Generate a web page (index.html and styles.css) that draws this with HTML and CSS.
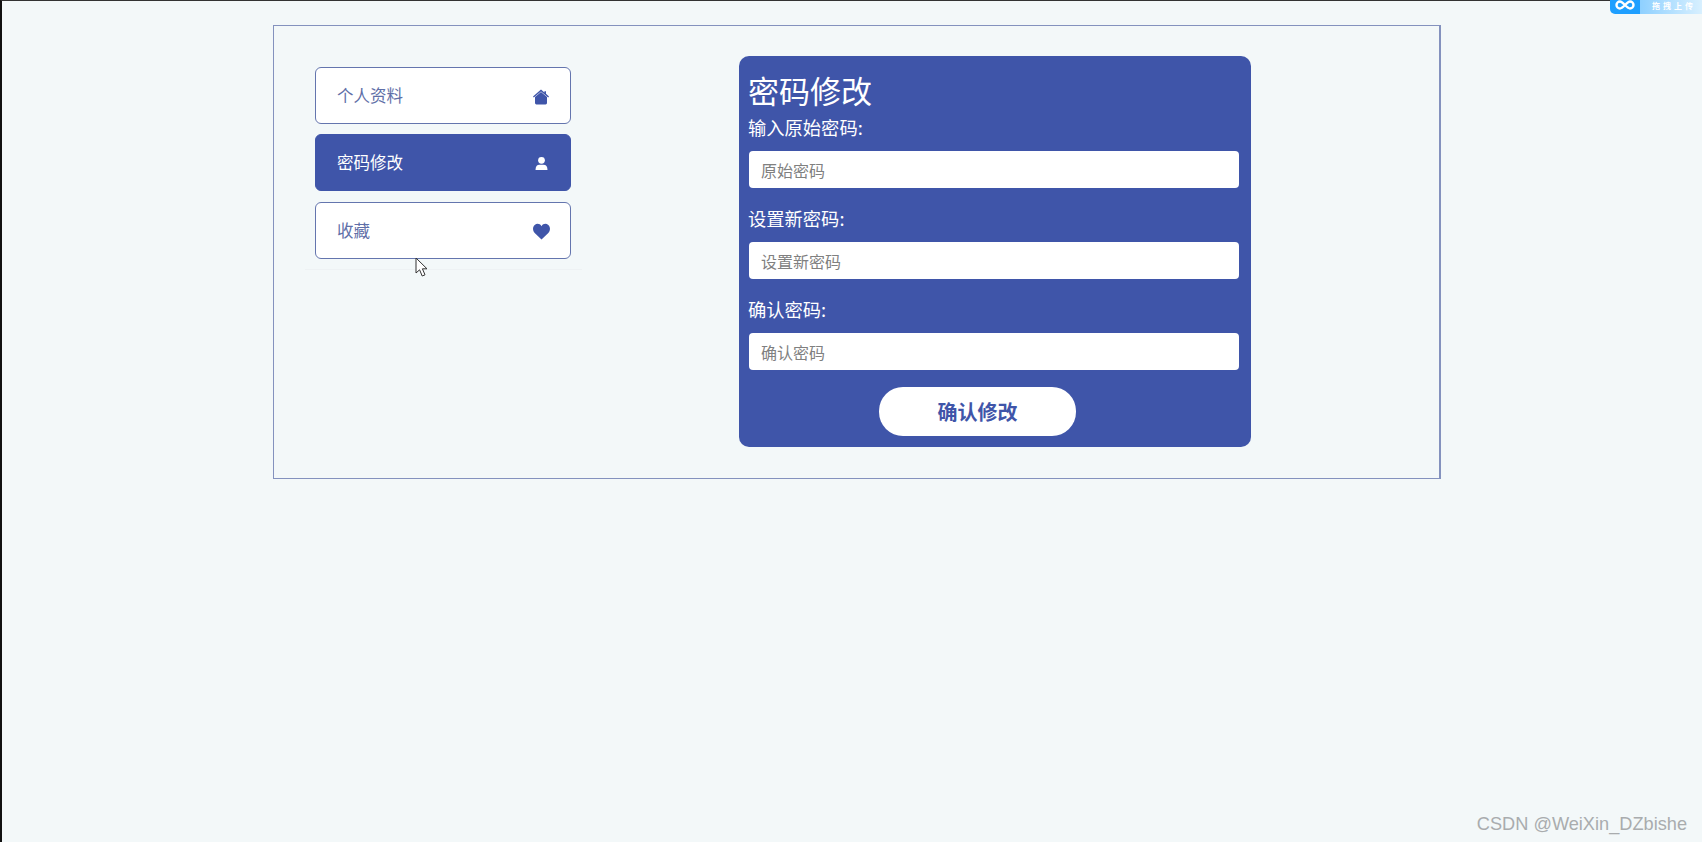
FILE: index.html
```html
<!DOCTYPE html>
<html lang="zh-CN">
<head>
  <meta charset="UTF-8" />
  <title>密码修改</title>
  <link rel="stylesheet" href="styles.css">
</head>
<body>
  <div class="frame">
    <!-- Side menu -->
    <nav class="menu">
      <a class="menu-item">
        <span>个人资料</span>
        <svg class="menu-icon" viewBox="0 0 16 16"><path d="M8 .6 L11.4 3.4 V2.2 H13 V4.8 L16 7.6 L15.2 8.5 L8 2.6 L.8 8.5 L0 7.6 Z"/><path d="M8 2.9 L14 7.9 V14 Q14 15.4 12.6 15.4 H3.4 Q2 15.4 2 14 V7.9 Z"/></svg>
      </a>
      <a class="menu-item active">
        <span>密码修改</span>
        <svg class="menu-icon" viewBox="0 0 16 16"><circle cx="8" cy="4.6" r="3.6"/><path d="M1.6 15 Q1.6 9.4 6 9.4 H10 Q14.4 9.4 14.4 15 Z"/></svg>
      </a>
      <a class="menu-item last">
        <span>收藏</span>
        <svg class="menu-icon heart" viewBox="0 0 16 16"><path d="M8 15.6 L1.6 9.4 C-.6 7.2 -.4 3.4 1.6 1.8 C3.8 0 6.6 .6 8 3 C9.4 .6 12.2 0 14.4 1.8 C16.4 3.4 16.6 7.2 14.4 9.4 Z"/></svg>
      </a>
    </nav>

    <!-- Password form -->
    <form class="panel">
      <h2>密码修改</h2>
      <div class="field">
        <label for="oldPwd">输入原始密码:</label>
        <input id="oldPwd" type="text" placeholder="原始密码" />
      </div>
      <div class="field">
        <label for="newPwd">设置新密码:</label>
        <input id="newPwd" type="text" placeholder="设置新密码" />
      </div>
      <div class="field">
        <label for="rePwd">确认密码:</label>
        <input id="rePwd" type="text" placeholder="确认密码" />
      </div>
      <button class="submit" type="button">确认修改</button>
    </form>
  </div>

  <!-- Mouse pointer -->
  <svg class="cursor" viewBox="0 0 14 21"><path d="M1 1 V16 L4.6 12.8 L7.2 19 L10 17.8 L7.4 11.8 H12 Z"/></svg>

  <!-- Top right widget -->
  <div class="widget">
    <span class="widget-logo">
      <svg viewBox="0 0 20 10"><path d="M5 1.5 C8 1.5 12 8.5 15 8.5 A3.5 3.5 0 0 0 15 1.5 C12 1.5 8 8.5 5 8.5 A3.5 3.5 0 0 1 5 1.5 Z"/></svg>
    </span>
    <span class="widget-text">拖拽上传</span>
  </div>

  <div class="watermark">CSDN @WeiXin_DZbishe</div>
</body>
</html>
```

FILE: styles.css
```css
* {
  box-sizing: border-box;
}

html, body {
  height: 100%;
}

body {
  margin: 0;
  overflow: hidden;
  background: #f3f8f9;
  border-left: 2px solid #111;
  border-top: 1px solid #333;
  font-family: "Noto Sans CJK SC", sans-serif;
}

.frame {
  display: flex;
  align-items: flex-start;
  width: 1168px;
  margin: 24px 0 0 271px;
  padding: 30px 0 31px 31px;
  border: 1px solid #8492be;
  border-right-width: 2px;
}

.menu {
  display: flex;
  flex-direction: column;
  gap: 10px;
  width: 277px;
  margin-top: 11px;
  padding: 0 11px 10px 10px;
  border-bottom: 1px solid #eef2f4;
}

.menu-item {
  display: flex;
  align-items: center;
  justify-content: space-between;
  height: 57px;
  padding: 0 21px;
  background: #fff;
  border: 1px solid #6475ae;
  border-radius: 6px;
  color: #5f6fa8;
  font-size: 16.5px;
}

.menu-item span {
  margin-bottom: 1px;
}

.menu-item.last {
  margin-top: 1px;
}

.menu-item.active {
  background: #3f55a9;
  border-color: #3f55a9;
  color: #fff;
}

.menu-icon {
  width: 16px;
  height: 16px;
  margin-top: 2px;
  fill: #3f55a9;
}

.menu-item.active .menu-icon {
  fill: #fff;
  width: 15px;
  height: 15px;
}

.heart {
  width: 17px;
  height: 17px;
  margin-right: -1px;
}

.panel {
  width: 512px;
  margin-left: 157px;
  padding: 14px 11px 11px 9px;
  background: #3f55a9;
  border-radius: 10px;
  color: #fff;
}

.panel h2 {
  margin: 0 0 6px;
  font-size: 31px;
  font-weight: 400;
  line-height: 40px;
}

.field {
  margin-bottom: 19px;
}

.field:last-of-type {
  margin-bottom: 17px;
}

.field label {
  display: block;
  height: 24px;
  margin-bottom: 11px;
  font-size: 18.3px;
  line-height: 22px;
}

.field input {
  display: block;
  width: 490px;
  height: 37px;
  margin-left: 1px;
  padding: 0 12px;
  background: #fff;
  border: none;
  border-radius: 4px;
  font-family: inherit;
  font-size: 16px;
}

.field input::placeholder {
  color: #808080;
  opacity: 1;
}

.submit {
  display: block;
  width: 197px;
  height: 49px;
  margin-left: 131px;
  background: #fff;
  border: none;
  border-radius: 24px;
  color: #3f55a9;
  font-family: inherit;
  font-size: 20px;
  font-weight: 700;
}

.cursor {
  position: absolute;
  left: 415px;
  top: 257px;
  width: 14px;
  height: 21px;
  fill: #fff;
  stroke: #333;
  stroke-width: 1;
}

.widget {
  position: absolute;
  top: 0;
  right: 0;
  display: flex;
  width: 92px;
  height: 14px;
  overflow: hidden;
  border-bottom-left-radius: 5px;
}

.widget-logo {
  display: flex;
  align-items: center;
  justify-content: center;
  width: 30px;
  background: #1e9fff;
}

.widget-logo svg {
  width: 20px;
  height: 10px;
  margin-top: -5px;
  fill: none;
  stroke: #fff;
  stroke-width: 2.4;
}

.widget-text {
  flex: 1;
  padding-left: 12px;
  background: linear-gradient(to right, #8ed0ff, #d8f0ff);
  color: #fff;
  font-size: 8px;
  font-weight: 700;
  letter-spacing: 3px;
  line-height: 12px;
  white-space: nowrap;
}

.watermark {
  position: absolute;
  right: 15px;
  bottom: 6px;
  color: #a9acae;
  font-family: "Liberation Sans", sans-serif;
  font-size: 18.2px;
  line-height: 24px;
}
```
